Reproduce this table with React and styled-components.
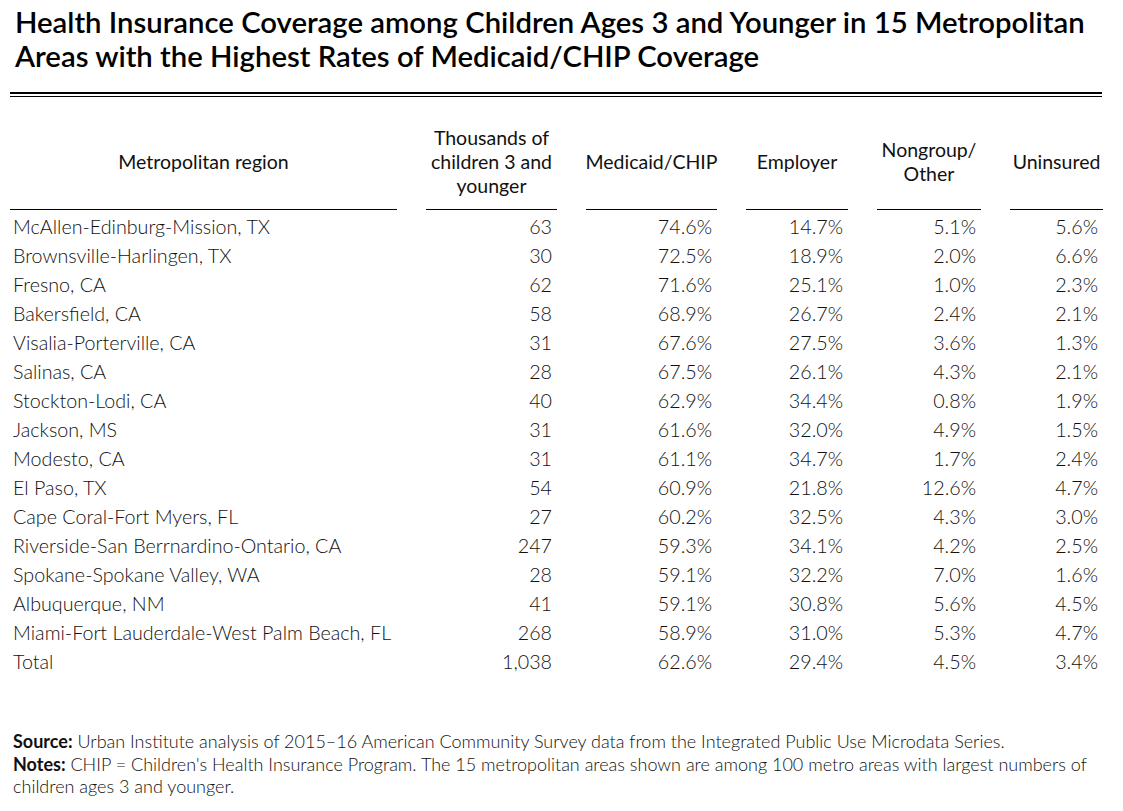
import React from "react";
import styled, { createGlobalStyle } from "styled-components";

const GlobalStyle = createGlobalStyle`
  html, body {
    margin: 0;
    padding: 0;
    background: #ffffff;
  }
  body {
    font-family: Lato, "Noto Sans", sans-serif;
    color: #111111;
  }
`;

const Page = styled.div`
  width: 1123px;
  height: 811px;
  box-sizing: border-box;
  padding: 5px 20px 0 10px;
  display: flex;
  flex-direction: column;
`;

const Title = styled.h1`
  margin: 0 0 0 5px;
  font-size: 29.3px;
  line-height: 34px;
  font-weight: 600;
  color: #000;
  letter-spacing: 0;
  white-space: nowrap;
`;

const DoubleRule = styled.div`
  margin-top: 19px;
  height: 2px;
  border-top: 2px solid #000;
  border-bottom: 1px solid #000;
  width: 1092px;
`;

const Grid = styled.div`
  display: grid;
  grid-template-columns: 387px 131px 131px 102px 104px 93px;
  column-gap: 29px;
  margin-top: 24px;
`;

const HeadCell = styled.div`
  display: flex;
  align-items: center;
  justify-content: center;
  text-align: center;
  height: 89px;
  padding-bottom: 7px;
  border-bottom: 1px solid #000;
  font-size: 19.5px;
  line-height: 24px;
  color: #111;
  box-sizing: border-box;
  white-space: nowrap;
`;

const Cell = styled.div`
  height: 29px;
  line-height: 29px;
  font-size: 19.7px;
  font-weight: 300;
  color: #111;
  text-align: ${(p) => (p.$left ? "left" : "right")};
  padding: ${(p) => (p.$left ? "0 0 0 3px" : "0 5px 0 0")};
  white-space: nowrap;
  &:nth-child(-n + 12) {
    margin-top: 2px;
  }
`;

const Footer = styled.div`
  margin-top: 54px;
  padding-left: 3px;
  font-size: 18px;
  line-height: 22.5px;
  font-weight: 300;
  color: #111;
`;

const Lead = styled.b`
  font-weight: 700;
`;

const heads = [
  "Metropolitan region",
  <>Thousands of<br />children 3 and<br />younger</>,
  "Medicaid/CHIP",
  "Employer",
  <>Nongroup/<br />Other</>,
  "Uninsured",
];

const rows = [
  ["McAllen-Edinburg-Mission, TX", "63", "74.6%", "14.7%", "5.1%", "5.6%"],
  ["Brownsville-Harlingen, TX", "30", "72.5%", "18.9%", "2.0%", "6.6%"],
  ["Fresno, CA", "62", "71.6%", "25.1%", "1.0%", "2.3%"],
  ["Bakersfield, CA", "58", "68.9%", "26.7%", "2.4%", "2.1%"],
  ["Visalia-Porterville, CA", "31", "67.6%", "27.5%", "3.6%", "1.3%"],
  ["Salinas, CA", "28", "67.5%", "26.1%", "4.3%", "2.1%"],
  ["Stockton-Lodi, CA", "40", "62.9%", "34.4%", "0.8%", "1.9%"],
  ["Jackson, MS", "31", "61.6%", "32.0%", "4.9%", "1.5%"],
  ["Modesto, CA", "31", "61.1%", "34.7%", "1.7%", "2.4%"],
  ["El Paso, TX", "54", "60.9%", "21.8%", "12.6%", "4.7%"],
  ["Cape Coral-Fort Myers, FL", "27", "60.2%", "32.5%", "4.3%", "3.0%"],
  ["Riverside-San Berrnardino-Ontario, CA", "247", "59.3%", "34.1%", "4.2%", "2.5%"],
  ["Spokane-Spokane Valley, WA", "28", "59.1%", "32.2%", "7.0%", "1.6%"],
  ["Albuquerque, NM", "41", "59.1%", "30.8%", "5.6%", "4.5%"],
  ["Miami-Fort Lauderdale-West Palm Beach, FL", "268", "58.9%", "31.0%", "5.3%", "4.7%"],
  ["Total", "1,038", "62.6%", "29.4%", "4.5%", "3.4%"],
];

export default function App() {
  return (
    <>
      <GlobalStyle />
      <Page>
        <Title>
          Health Insurance Coverage among Children Ages 3 and Younger in 15 Metropolitan
          <br />
          Areas with the Highest Rates of Medicaid/CHIP Coverage
        </Title>
        <DoubleRule />
        <Grid>
          {heads.map((h, i) => (
            <HeadCell key={i}>{h}</HeadCell>
          ))}
          {rows.map((r) =>
            r.map((v, j) => (
              <Cell key={r[0] + j} $left={j === 0}>
                {v}
              </Cell>
            ))
          )}
        </Grid>
        <Footer>
          <div>
            <Lead>Source:</Lead> Urban Institute analysis of 2015–16 American Community Survey data from the Integrated Public Use Microdata Series.
          </div>
          <div>
            <Lead>Notes:</Lead> CHIP = Children's Health Insurance Program. The 15 metropolitan areas shown are among 100 metro areas with largest numbers of children ages 3 and younger.
          </div>
        </Footer>
      </Page>
    </>
  );
}
